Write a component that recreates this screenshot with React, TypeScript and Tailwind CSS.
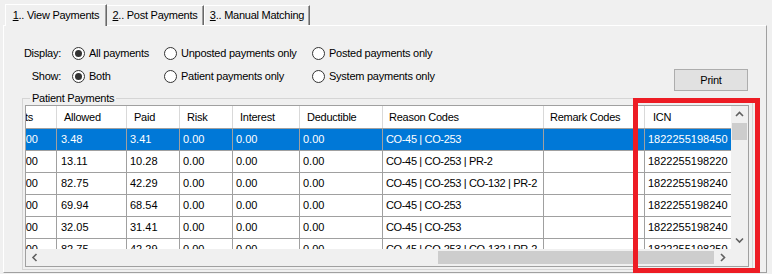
import React from "react";

const rows = [
  { a: "3.48", p: "3.41", r: "CO-45 | CO-253", icn: "1822255198450", sel: true },
  { a: "13.11", p: "10.28", r: "CO-45 | CO-253 | PR-2", icn: "1822255198220" },
  { a: "82.75", p: "42.29", r: "CO-45 | CO-253 | CO-132 | PR-2", icn: "1822255198240" },
  { a: "69.94", p: "68.54", r: "CO-45 | CO-253", icn: "1822255198240" },
  { a: "32.05", p: "31.41", r: "CO-45 | CO-253", icn: "1822255198240" },
  { a: "82.75", p: "42.29", r: "CO-45 | CO-253 | CO-132 | PR-2", icn: "1822255198250" },
];

function Radio({ checked, label }: { checked?: boolean; label: string }) {
  return (
    <div className="flex items-center">
      <span className="w-[13px] h-[13px] rounded-full border border-[#333333] bg-white flex items-center justify-center shrink-0">
        {checked && <span className="w-[7px] h-[7px] rounded-full bg-[#333333]" />}
      </span>
      <span className="ml-[4px] tracking-[-0.25px] whitespace-nowrap">{label}</span>
    </div>
  );
}

function Chevron({ dir }: { dir: "up" | "down" | "left" | "right" }) {
  const d =
    dir === "up"
      ? "M1 5 L4.5 1.5 L8 5"
      : dir === "down"
      ? "M1 1.5 L4.5 5 L8 1.5"
      : dir === "left"
      ? "M5.5 1 L2 4.5 L5.5 8"
      : "M2 1 L5.5 4.5 L2 8";
  const w = dir === "up" || dir === "down" ? 9 : 7;
  const h = dir === "up" || dir === "down" ? 7 : 9;
  return (
    <svg width={w} height={h} viewBox={`0 0 ${w} ${h}`}>
      <path d={d} fill="none" stroke="#606060" strokeWidth="1.6" />
    </svg>
  );
}

function Cell({ w, children, className = "" }: { w: string; children?: React.ReactNode; className?: string }) {
  return (
    <div className={`${w} shrink-0 h-full flex items-center overflow-hidden whitespace-nowrap border-r ${className}`}>
      {children}
    </div>
  );
}

export default function App() {
  return (
    <div className="relative w-[772px] h-[274px] bg-[#f0f0f0] overflow-hidden font-['Liberation_Sans',Arial,sans-serif] text-[11px] leading-[13px] text-black">
      {/* Tabs */}
      <div className="flex items-end pl-[5px] pt-[3px] h-[25px]">
        <div className="relative z-10 w-[102px] h-[22px] -mb-[1px] bg-[#f0f0f0] border-l border-t border-white border-r border-r-[#696969] shadow-[inset_-1px_0_0_#a0a0a0] flex items-center justify-center tracking-[-0.25px] whitespace-nowrap">
          <span><span className="underline">1</span>.. View Payments</span>
        </div>
        <div className="w-[97px] h-[20px] bg-[#f0f0f0] border-t border-white border-r border-r-[#696969] shadow-[inset_-1px_0_0_#a0a0a0] flex items-center justify-center tracking-[-0.25px] whitespace-nowrap">
          <span><span className="underline">2</span>.. Post Payments</span>
        </div>
        <div className="w-[106px] h-[20px] bg-[#f0f0f0] border-t border-l border-white border-r border-r-[#696969] shadow-[inset_-1px_0_0_#a0a0a0] flex items-center justify-center tracking-[-0.25px] whitespace-nowrap">
          <span><span className="underline">3</span>.. Manual Matching</span>
        </div>
      </div>

      {/* Tab page */}
      <div className="ml-[3px] w-[764px] h-[248px] border-t border-l border-white border-r border-b border-r-[#a0a0a0] border-b-[#a0a0a0] flex flex-col">
        <div className="flex pt-[16px]">
          <div className="flex flex-col">
            <div className="flex items-center h-[23px]">
              <div className="w-[57px] text-right tracking-[-0.25px]">Display:</div>
              <div className="ml-[11px] w-[92px]"><Radio checked label="All payments" /></div>
              <div className="w-[148px]"><Radio label="Unposted payments only" /></div>
              <div><Radio label="Posted payments only" /></div>
            </div>
            <div className="flex items-center h-[23px]">
              <div className="w-[57px] text-right tracking-[-0.25px]">Show:</div>
              <div className="ml-[11px] w-[92px]"><Radio checked label="Both" /></div>
              <div className="w-[148px]"><Radio label="Patient payments only" /></div>
              <div><Radio label="System payments only" /></div>
            </div>
          </div>
          <button className="ml-auto mr-[18px] mt-[27px] w-[74px] h-[22px] bg-[#e1e1e1] border border-[#adadad] flex items-center justify-center tracking-[-0.25px]">
            Print
          </button>
        </div>

        <fieldset className="ml-[18px] mt-[1px] w-[731px] border border-[#d5d5d5] pl-[2px] pr-[3px] pb-[2px]">
          <legend className="ml-[5px] px-[2px] leading-[13px] tracking-[-0.25px]">Patient Payments</legend>
          <div className="w-[724px] h-[162px] border border-[#a0a0a0] bg-white flex flex-col">
            <div className="flex h-[143px]">
              <div className="w-[705px] flex flex-col overflow-hidden">
                {/* Header */}
                <div className="flex h-[23px] shrink-0 border-b border-[#a0a0a0] bg-white tracking-[-0.25px]">
                  <Cell w="w-[31px]" className="border-[#d9d9d9]">
                    <div className="w-[7px] shrink-0 flex justify-end">Adjustments</div>
                  </Cell>
                  <Cell w="w-[70px]" className="border-[#d9d9d9] pl-[7px]">Allowed</Cell>
                  <Cell w="w-[53px]" className="border-[#d9d9d9] pl-[7px]">Paid</Cell>
                  <Cell w="w-[53px]" className="border-[#d9d9d9] pl-[7px]">Risk</Cell>
                  <Cell w="w-[67px]" className="border-[#d9d9d9] pl-[7px]">Interest</Cell>
                  <Cell w="w-[83px]" className="border-[#d9d9d9] pl-[7px]">Deductible</Cell>
                  <Cell w="w-[161px]" className="border-[#d9d9d9] pl-[6px]">Reason Codes</Cell>
                  <Cell w="w-[101px]" className="border-[#d9d9d9] pl-[6px]">Remark Codes</Cell>
                  <Cell w="w-[86px]" className="border-transparent pl-[8px]">ICN</Cell>
                </div>
                {rows.map((r, i) => (
                  <div
                    key={i}
                    className={`flex h-[22px] shrink-0 border-b border-[#a0a0a0] ${r.sel ? "bg-[#0078d7] text-white" : "bg-white"}`}
                  >
                    <Cell w="w-[31px]" className="border-[#a0a0a0]">
                      <div className="w-[12px] shrink-0 flex justify-end">0.00</div>
                    </Cell>
                    <Cell w="w-[70px]" className="border-[#a0a0a0] pl-[4px]">{r.a}</Cell>
                    <Cell w="w-[53px]" className="border-[#a0a0a0] pl-[3px]">{r.p}</Cell>
                    <Cell w="w-[53px]" className="border-[#a0a0a0] pl-[3px]">0.00</Cell>
                    <Cell w="w-[67px]" className="border-[#a0a0a0] pl-[3px]">0.00</Cell>
                    <Cell w="w-[83px]" className="border-[#a0a0a0] pl-[3px]">0.00</Cell>
                    <Cell w="w-[161px]" className="border-[#a0a0a0] pl-[3px] tracking-[-0.35px]">{r.r}</Cell>
                    <Cell w="w-[101px]" className="border-[#a0a0a0]" />
                    <Cell w="w-[86px]" className="border-transparent pl-[3px]">{r.icn}</Cell>
                  </div>
                ))}
              </div>
              {/* Vertical scrollbar */}
              <div className="w-[17px] bg-[#f0f0f0] flex flex-col">
                <div className="h-[17px] flex items-center justify-center"><Chevron dir="up" /></div>
                <div className="mx-[1px] h-[17px] bg-[#cdcdcd]" />
                <div className="flex-1" />
                <div className="h-[17px] flex items-center justify-center"><Chevron dir="down" /></div>
              </div>
            </div>
            {/* Horizontal scrollbar */}
            <div className="flex h-[17px]">
              <div className="w-[705px] bg-[#f0f0f0] flex">
                <div className="w-[17px] flex items-center justify-center"><Chevron dir="left" /></div>
                <div className="flex-1 flex justify-end py-[2px]">
                  <div className="w-[276px] h-full bg-[#cdcdcd]" />
                </div>
                <div className="w-[17px] flex items-center justify-center"><Chevron dir="right" /></div>
              </div>
              <div className="w-[17px] bg-[#f0f0f0]" />
            </div>
          </div>
        </fieldset>
      </div>

      {/* Red annotation box */}
      <div className="absolute left-[633px] top-[98px] w-[127px] h-[175px] border-[5px] border-[#ed1c24] pointer-events-none" />
    </div>
  );
}
